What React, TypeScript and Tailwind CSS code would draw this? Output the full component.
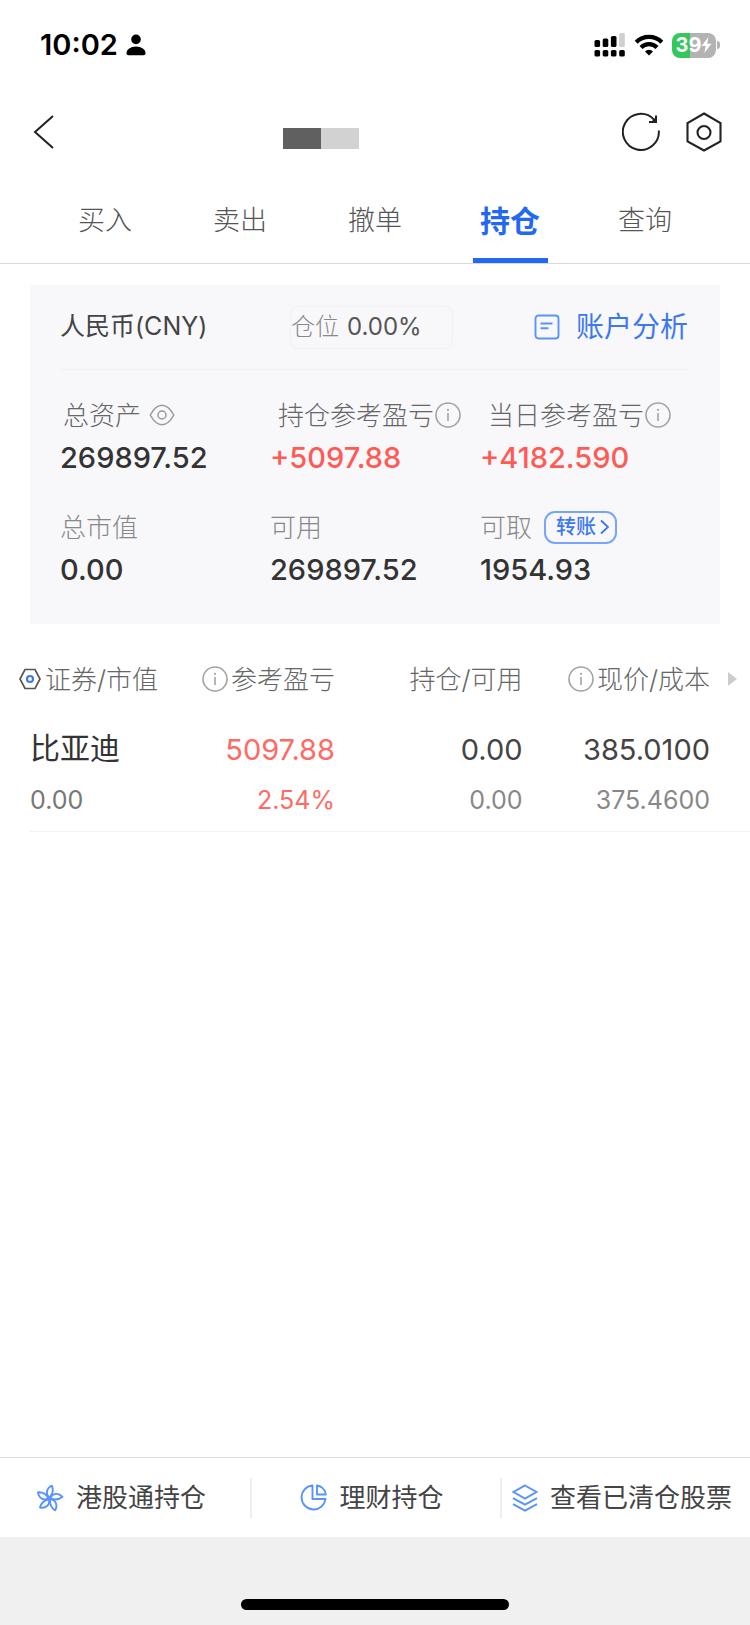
import { ReactNode } from 'react';
import clsx from 'clsx';

const TABS = ['买入', '卖出', '撤单', '持仓', '查询'];
const ACTIVE_TAB = '持仓';

interface Position {
  name: string;
  marketValue: string;
  profit: string;
  profitRate: string;
  holding: string;
  available: string;
  price: string;
  cost: string;
}

const POSITIONS: Position[] = [
  {
    name: '比亚迪',
    marketValue: '0.00',
    profit: '5097.88',
    profitRate: '2.54%',
    holding: '0.00',
    available: '0.00',
    price: '385.0100',
    cost: '375.4600',
  },
];

function InfoIcon() {
  return (
    <svg className="w-[26px] h-[26px] shrink-0 text-[#a3a3a3]" viewBox="0 0 26 26" fill="none" stroke="currentColor">
      <circle cx="13" cy="13" r="12" strokeWidth="1.6" />
      <path d="M13 11v8" strokeWidth="1.6" />
      <circle cx="13" cy="7.8" r="1.1" fill="currentColor" stroke="none" />
    </svg>
  );
}

function SignalIcon() {
  return (
    <svg className="w-8 h-[26px]" viewBox="0 0 32 26">
      <rect x="0.5" y="8" width="5.6" height="7" rx="1.6" />
      <rect x="8.7" y="6.5" width="5.6" height="8.5" rx="1.6" />
      <rect x="16.9" y="4" width="5.6" height="11" rx="1.6" />
      <rect x="25.2" y="1" width="5.6" height="14" rx="1.6" fill="#cfcfcf" />
      <rect x="0.5" y="18" width="5.6" height="6.5" rx="1.6" />
      <rect x="8.7" y="18" width="5.6" height="6.5" rx="1.6" />
      <rect x="16.9" y="18" width="5.6" height="6.5" rx="1.6" />
      <rect x="25.2" y="18" width="5.6" height="6.5" rx="1.6" />
    </svg>
  );
}

function WifiIcon() {
  return (
    <svg className="w-[30px] h-[22px]" viewBox="0 0 30 22" fill="none" stroke="black" strokeWidth="4.2">
      <path d="M2.2 8.2a18.2 18.2 0 0 1 25.6 0" />
      <path d="M7 13.4a11.4 11.4 0 0 1 16 0" />
      <path d="M15 21.5l-4-4.1a5.8 5.8 0 0 1 8 0z" fill="black" stroke="none" />
    </svg>
  );
}

function StatusBar() {
  return (
    <div className="flex items-center justify-between h-[90px] pl-10 pr-[30px]">
      <div className="flex items-center gap-2">
        <span className="text-[29px] leading-8 font-semibold">10:02</span>
        <svg className="w-5 h-[22px]" viewBox="0 0 20 22">
          <circle cx="10" cy="5.4" r="4.8" />
          <path d="M.5 19.3C.5 15.6 4.5 12.6 10 12.6s9.5 3 9.5 6.7c0 1.3-.7 1.9-2 1.9h-15c-1.3 0-2-.6-2-1.9z" />
        </svg>
      </div>
      <div className="flex items-center gap-2">
        <SignalIcon />
        <WifiIcon />
        <div className="flex items-center gap-px">
          <div className="flex items-center justify-center w-11 h-[25px] rounded-lg bg-linear-to-r from-[#34c759] from-40% to-[#b3b3b3] to-40% text-white">
            <span className="text-xl leading-6 font-bold">39</span>
            <svg className="w-[11px] h-4" viewBox="0 0 11 16" fill="currentColor">
              <path d="M7.5 0L.5 9h4.2L3.3 16l7.2-9.3H6.2z" />
            </svg>
          </div>
          <div className="w-[3px] h-2 rounded-r-full bg-[#b3b3b3]" />
        </div>
      </div>
    </div>
  );
}

function NavBar() {
  return (
    <header className="flex items-center justify-between h-[84px] pl-8 pr-7">
      <button aria-label="返回" className="w-24">
        <svg className="w-6 h-9" viewBox="0 0 24 36" fill="none" stroke="#222" strokeWidth="2">
          <path d="M21 2L3 18l18 16" />
        </svg>
      </button>
      <div className="flex pt-3 pl-[58px] mr-auto ml-[14%]">
        <div className="w-[38px] h-[21px] bg-[#606060]" />
        <div className="w-[38px] h-[21px] bg-[#d2d2d2]" />
      </div>
      <div className="flex items-center gap-[26px]">
        <button aria-label="刷新">
          <svg className="w-[38px] h-10" viewBox="0 0 38 40" fill="none" stroke="#222" strokeWidth="2">
            <path d="M36.8 18.5A18 18 0 1 1 32 7.6" />
            <path d="M27 10h7V3.5" />
            <path d="M29 10h5V5z" fill="#222" stroke="none" />
          </svg>
        </button>
        <button aria-label="设置">
          <svg className="w-9 h-10" viewBox="0 0 36 40" fill="none" stroke="#222" strokeWidth="2.1">
            <path d="M18 1.5L34.5 11v18.5L18 38.5 1.5 29.5V11z" />
            <circle cx="18" cy="20.5" r="6.5" />
          </svg>
        </button>
      </div>
    </header>
  );
}

function TabBar() {
  return (
    <nav className="grid grid-cols-5 h-[90px] px-[5%] border-b border-[#d9d9d9]">
      {TABS.map((tab) => {
        const active = tab === ACTIVE_TAB;
        return (
          <button
            key={tab}
            className={clsx(
              'flex flex-col items-center justify-between pt-[27px]',
              active ? 'text-[30px] font-bold text-[#2468f2]' : 'text-[27px] font-light text-[#555]'
            )}
          >
            <span className="leading-10">{tab}</span>
            {active && <span className="w-[75px] h-[5px] bg-[#2468f2]" />}
          </button>
        );
      })}
    </nav>
  );
}

interface StatProps {
  label: string;
  value: string;
  rise?: boolean;
  muted?: boolean;
  className?: string;
  children?: ReactNode;
}

function Stat({ label, value, rise, muted, className, children }: StatProps) {
  return (
    <div>
      <div
        className={clsx(
          'flex items-center h-10 text-[26px] font-light whitespace-nowrap',
          muted ? 'text-[#888]' : 'text-[#666]',
          className
        )}
      >
        {label}
        {children}
      </div>
      <p className={clsx('text-[29px] leading-[46px] font-medium', rise ? 'text-[#ff5a55]' : 'text-[#333]')}>{value}</p>
    </div>
  );
}

function AccountCard() {
  return (
    <section className="mx-[30px] mt-[21px] px-[30px] bg-[#f8f8fb]">
      <div className="flex items-center justify-between h-[85px] border-b border-[#f0f1f4]">
        <h2 className="w-[230px] text-[25px] text-[#444]">人民币(CNY)</h2>
        <div className="flex items-center gap-2 w-[163px] h-[43px] mr-auto rounded-lg border border-[#f1f2f5] text-[24px] whitespace-nowrap">
          <span className="font-light text-[#888]">仓位</span>
          <span className="text-[#555]">0.00%</span>
        </div>
        <a href="#analysis" className="flex items-center gap-4 pr-[2px] text-[28px] text-[#3c78f0]">
          <svg className="w-[26px] h-[26px]" viewBox="0 0 26 26" fill="none" stroke="#5a94fb" strokeWidth="1.9">
            <rect x="1.5" y="1.5" width="23" height="23" rx="3" />
            <path d="M6.5 9.5h12M6.5 14.2h8" />
          </svg>
          账户分析
        </a>
      </div>

      <div className="grid grid-cols-3 gap-y-[26px] pt-[25px] pb-[31px]">
        <Stat label="总资产" value="269897.52" className="pl-[3px] gap-2">
          <button aria-label="隐藏资产">
            <svg className="w-[26px] h-[22px]" viewBox="0 0 26 22" fill="none" stroke="#999" strokeWidth="1.5">
              <path d="M1.2 11C4.5 5 8.5 1.2 13 1.2S21.5 5 24.8 11C21.5 17 17.5 20.8 13 20.8S4.5 17 1.2 11z" />
              <circle cx="13" cy="11" r="4" />
            </svg>
          </button>
        </Stat>
        <Stat label="持仓参考盈亏" value="+5097.88" rise className="pl-2 gap-px">
          <InfoIcon />
        </Stat>
        <Stat label="当日参考盈亏" value="+4182.590" rise className="pl-2 gap-px">
          <InfoIcon />
        </Stat>
        <Stat label="总市值" value="0.00" muted />
        <Stat label="可用" value="269897.52" muted />
        <Stat label="可取" value="1954.93" muted className="gap-3">
          <button className="flex items-center gap-1 h-[33px] pl-[10px] pr-[6px] rounded-[11px] border-2 border-[#78a5fa] text-xl font-medium text-[#3c78f0]">
            转账
            <svg className="w-[9px] h-4" viewBox="0 0 9 16" fill="none" stroke="currentColor" strokeWidth="1.9">
              <path d="M1 1.5L8 8l-7 6.5" />
            </svg>
          </button>
        </Stat>
      </div>
    </section>
  );
}

function PositionTable() {
  return (
    <table className="w-full mt-[31px] table-fixed text-right whitespace-nowrap">
      <colgroup>
        <col className="w-[24%]" />
        <col />
        <col className="w-[25%]" />
        <col className="w-[25%]" />
        <col className="w-10" />
      </colgroup>
      <thead className="text-[26px] text-[#666]">
        <tr className="h-12">
          <th className="pl-[19px] font-light">
            <div className="flex items-center gap-1">
              <svg className="w-[22px] h-[22px] shrink-0" viewBox="0 0 22 22" fill="none" strokeWidth="1.7">
                <path d="M6 1.5h10l5 9.5-5 9.5H6L1 11z" stroke="#555" />
                <circle cx="11" cy="11" r="3" stroke="#3c78f0" strokeWidth="2.2" />
              </svg>
              证券/市值
            </div>
          </th>
          <th className="font-light">
            <div className="flex items-center justify-end gap-[3px]">
              <InfoIcon />
              参考盈亏
            </div>
          </th>
          <th className="font-light">持仓/可用</th>
          <th className="font-light">
            <div className="flex items-center justify-end gap-[3px]">
              <InfoIcon />
              现价/成本
            </div>
          </th>
          <th>
            <svg className="w-[10px] h-[14px] ml-[18px]" viewBox="0 0 10 14" fill="#ccc">
              <path d="M0 0l9 7-9 7z" />
            </svg>
          </th>
        </tr>
      </thead>
      <tbody>
        {POSITIONS.map((p) => (
          <tr key={p.name} className="text-[29px] leading-[50px] text-[#555]">
            <td className="pl-[30px] pt-[22px] text-left">
              <p className="mb-1 text-[30px] leading-[46px] text-[#333]">{p.name}</p>
              <p className="text-[25px] text-[#777]">{p.marketValue}</p>
            </td>
            <td className="pt-[22px] text-[#ff6a64]">
              <p>{p.profit}</p>
              <p className="text-[25px]">{p.profitRate}</p>
            </td>
            <td className="pt-[22px]">
              <p className="text-[#444]">{p.holding}</p>
              <p className="text-[25px] text-[#888]">{p.available}</p>
            </td>
            <td className="pt-[22px]">
              <p className="text-[#444]">{p.price}</p>
              <p className="text-[25px] text-[#888]">{p.cost}</p>
            </td>
            <td />
          </tr>
        ))}
      </tbody>
    </table>
  );
}

function FlowerIcon() {
  return (
    <svg className="w-7 h-7" viewBox="0 0 28 28" fill="none" stroke="#5a94fb" strokeWidth="1.9" strokeLinejoin="round">
      {[4, 76, 148, 220, 292].map((angle) => (
        <g key={angle} transform={`rotate(${angle} 13.5 14.5)`}>
          <path d="M13.5 13.5C9 10.500 9.500 4.500 15 1.500c2 4 1.500 8-1.500 12z" />
        </g>
      ))}
    </svg>
  );
}

function PieIcon() {
  return (
    <svg className="w-[27px] h-[27px]" viewBox="0 0 27 27" fill="none" stroke="#5a94fb" strokeWidth="1.9" strokeLinejoin="round">
      <path d="M12.5 1.5A12 12 0 1 0 25.5 15h-13z" />
      <path d="M17 1.5v9h8.8A10.5 10.5 0 0 0 17 1.5z" />
    </svg>
  );
}

function LayersIcon() {
  return (
    <svg className="w-[26px] h-7" viewBox="0 0 26 28" fill="none" stroke="#5a94fb" strokeWidth="2">
      <path d="M13 1.5L24.5 8 13 14.5 1.5 8z" />
      <path d="M1 14.2l12 6.4 12-6.4" />
      <path d="M1 20.2l12 6.4 12-6.4" />
    </svg>
  );
}

const LINKS = [
  { label: '港股通持仓', href: '#hk', icon: <FlowerIcon /> },
  { label: '理财持仓', href: '#wealth', icon: <PieIcon /> },
  { label: '查看已清仓股票', href: '#closed', icon: <LayersIcon /> },
];

export default function App() {
  return (
    <div className="flex flex-col min-h-screen bg-white text-black font-['Inter','Noto_Sans_CJK_SC',sans-serif]">
      <StatusBar />
      <NavBar />
      <TabBar />
      <main>
        <AccountCard />
        <PositionTable />
        <hr className="ml-[30px] mt-[6px] border-[#f3f3f3]" />
      </main>

      <footer className="mt-auto">
        <div className="grid grid-cols-3 items-center h-20 border-t border-[#dcdcdc]">
          {LINKS.map((link, i) => (
            <a
              key={link.label}
              href={link.href}
              className={clsx(
                'flex items-center justify-center gap-3 h-10 pr-2 text-[26px] text-[#444] whitespace-nowrap',
                i > 0 && 'border-l-2 border-[#eee]'
              )}
            >
              {link.icon}
              {link.label}
            </a>
          ))}
        </div>
        <div className="flex justify-center items-end h-22 pb-[15px] bg-[#f0f0f0]">
          <div className="w-[268px] h-[11px] rounded-full bg-black" />
        </div>
      </footer>
    </div>
  );
}
